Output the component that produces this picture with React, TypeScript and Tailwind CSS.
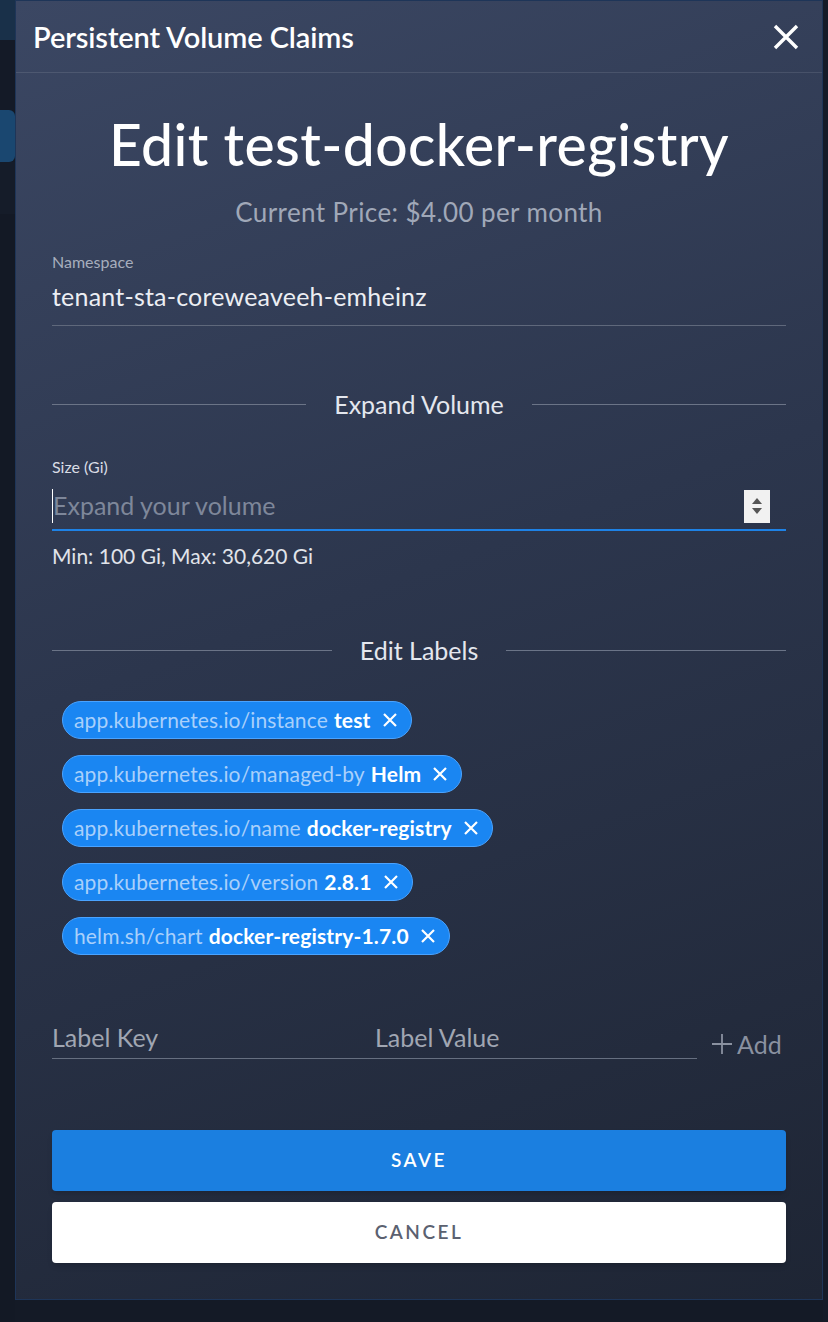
import React from "react"

const labels = [
  { k: "app.kubernetes.io/instance", v: "test" },
  { k: "app.kubernetes.io/managed-by", v: "Helm" },
  { k: "app.kubernetes.io/name", v: "docker-registry" },
  { k: "app.kubernetes.io/version", v: "2.8.1" },
  { k: "helm.sh/chart", v: "docker-registry-1.7.0" },
]

function Divider({ title }: { title: string }) {
  return (
    <div className="flex h-[30px] items-center gap-7">
      <div className="h-px flex-1 bg-[#6b7487]" />
      <span className="text-[25px] leading-[30px] text-[#e4e7ee]">{title}</span>
      <div className="h-px flex-1 bg-[#6b7487]" />
    </div>
  )
}

function Chip({ k, v }: { k: string; v: string }) {
  return (
    <div className="flex h-[38px] w-fit items-center gap-[6px] rounded-full border border-[#4aa3ff] bg-[#1a86f2] pl-[11px] pr-[13px] text-[21px] tracking-[0.15px]">
      <span className="text-[#a9d0fb]">{k}</span>
      <span className="font-bold text-white">{v}</span>
      <svg width="16" height="16" viewBox="0 0 16 16" className="ml-[5px]">
        <path d="M2 2L14 14M14 2L2 14" stroke="white" strokeWidth="2.2" />
      </svg>
    </div>
  )
}

export default function App() {
  return (
    <div className="relative flex h-[1322px] w-[828px] overflow-hidden bg-[#141a26] font-['Lato',sans-serif]">
      {/* page behind the modal */}
      <div className="flex w-[15px] flex-col">
        <div className="h-[40px] bg-[#193049]" />
        <div className="h-[70px] bg-[#141a27]" />
        <div className="h-[52px] rounded-r-md bg-[#1a4770]" />
        <div className="h-[52px] bg-[#151c29]" />
        <div className="h-[1108px] bg-[#131925]" />
      </div>

      <div className="flex h-[1300px] w-[808px] flex-col border border-[#1e3558] bg-[linear-gradient(160deg,#3b4763_0%,#2c364d_45%,#1e2534_100%)]">
        {/* header */}
        <div className="flex h-[72px] items-center justify-between border-b border-white/10 pl-[17px] pr-[22px]">
          <span className="text-[29px] font-semibold tracking-[-0.1px] text-white">Persistent Volume Claims</span>
          <svg width="28" height="28" viewBox="0 0 28 28">
            <path d="M3 3L25 25M25 3L3 25" stroke="white" strokeWidth="3.4" />
          </svg>
        </div>

        <div className="flex flex-col px-[36px]">
          <h1 className="mt-[38px] text-center text-[57px] font-medium leading-[66px] tracking-[0.4px] text-white">
            Edit test-docker-registry
          </h1>
          <p className="mt-[20px] text-center text-[26px] leading-[31px] tracking-[0.4px] text-[#a0a8b8]">
            Current Price: $4.00 per month
          </p>

          {/* namespace */}
          <div className="mt-[24px] flex flex-col border-b border-[#5f687b] pb-[14px]">
            <span className="text-[16px] leading-[20px] text-[#a7aebd]">Namespace</span>
            <span className="mt-[9px] text-[25px] leading-[30px] tracking-[0.2px] text-[#eceef3]">
              tenant-sta-coreweaveeh-emheinz
            </span>
          </div>

          <div className="mt-[63px]">
            <Divider title="Expand Volume" />
          </div>

          {/* size */}
          <div className="mt-[38px] flex flex-col">
            <span className="text-[16px] leading-[20px] text-[#d9dde5]">Size (Gi)</span>
            <div className="mt-[6px] flex h-[48px] items-center border-b-2 border-[#1e82e6]">
              <div className="h-[34px] w-px bg-white" />
              <span className="flex-1 text-[25px] text-[#7e879a]">Expand your volume</span>
              <div className="mr-[16px] flex h-[33px] w-[26px] flex-col items-center justify-center gap-[4px] bg-[#f1f1f1]">
                <svg width="10" height="6" viewBox="0 0 10 6"><path d="M5 0L10 6H0Z" fill="#555" /></svg>
                <svg width="10" height="6" viewBox="0 0 10 6"><path d="M0 0H10L5 6Z" fill="#555" /></svg>
              </div>
            </div>
            <span className="mt-[12px] text-[21px] leading-[26px] text-[#e1e4ea]">Min: 100 Gi, Max: 30,620 Gi</span>
          </div>

          <div className="mt-[66px]">
            <Divider title="Edit Labels" />
          </div>

          {/* chips */}
          <div className="mt-[36px] flex flex-col gap-[16px] pl-[10px]">
            {labels.map(l => (
              <Chip key={l.k} k={l.k} v={l.v} />
            ))}
          </div>

          {/* add label */}
          <div className="mt-[67px] flex items-end">
            <div className="flex w-[645px] border-b border-[#666f80] pb-[6px] text-[25px] leading-[30px] text-[#a0a6b2]">
              <span className="w-[323px]">Label Key</span>
              <span>Label Value</span>
            </div>
            <div className="ml-[14px] flex items-center gap-[4px] text-[25px] leading-[30px] text-[#8a91a0]">
              <svg width="22" height="22" viewBox="0 0 22 22"><path d="M11 1V21M1 11H21" stroke="#8a91a0" strokeWidth="1.8" /></svg>
              <span>Add</span>
            </div>
          </div>

          {/* buttons */}
          <button className="mt-[71px] h-[61px] rounded-[4px] bg-[#1b7fe0] text-[19px] font-semibold tracking-[2.5px] text-white shadow-md">
            SAVE
          </button>
          <button className="mt-[11px] h-[61px] rounded-[4px] bg-white text-[19px] font-semibold tracking-[2.5px] text-[#5b6170] shadow-md">
            CANCEL
          </button>
        </div>
      </div>

      <div className="flex-1 bg-[#151b28]" />
    </div>
  )
}
